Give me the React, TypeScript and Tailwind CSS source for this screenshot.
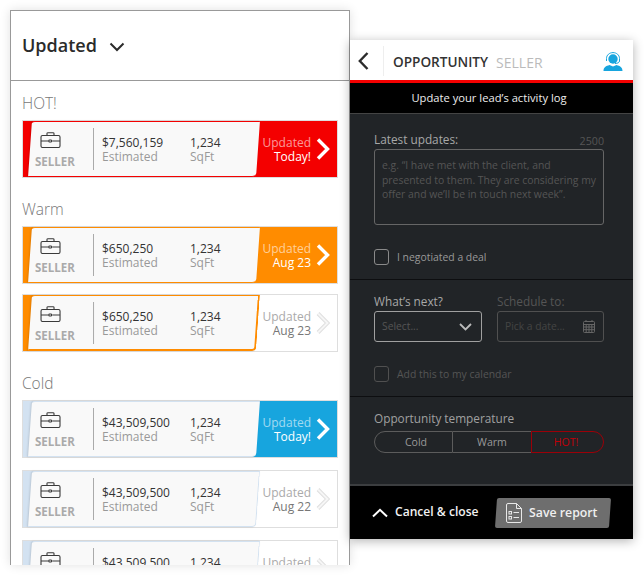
import React from "react";

function Briefcase() {
  return (
    <svg width="21" height="16" viewBox="0 0 21 16" fill="none" stroke="#3a3a3a" strokeWidth="1.1">
      <rect x="1" y="3.5" width="19" height="12" rx="1.5" />
      <path d="M7 3.5V1.6C7 1 7.4.7 8 .7h5c.6 0 1 .3 1 .9v1.9" />
      <path d="M1 9h7.8M12.2 9H20" />
      <rect x="8.9" y="8" width="2.6" height="2" rx=".6" />
    </svg>
  );
}

function Chevron({ selected }: { selected?: boolean }) {
  return (
    <svg width="14" height="22" viewBox="0 0 14 22" fill="none">
      {selected ? (
        <path d="M2 1.500 11.500 11 2 20.500" stroke="#ffffff" strokeWidth="3.4" />
      ) : (
        <>
          <path d="M2 1.500 11.500 11 2 20.500" stroke="#e0e0e0" strokeWidth="4" />
          <path d="M2 1.500 11.500 11 2 20.500" stroke="#f6f6f6" strokeWidth="1.800" />
        </>
      )}
    </svg>
  );
}

type CardProps = {
  price: string;
  date: string;
  bg: string;
  edge: string;
  selected?: boolean;
  strong?: boolean;
  gap: string;
};

function Card({ price, date, bg, edge, selected, strong, gap }: CardProps) {
  return (
    <div className={`${gap} flex h-[58px] w-[316px] border border-[#dedede] ${bg}`}>
      <div
        className={`ml-[7px] h-[56px] w-[228px] shrink-0 -skew-x-[4deg] rounded-br-[4px] rounded-tl-[3px] border-y bg-[#f9f9f9] ${edge} ${selected ? "" : "border-r"} ${strong ? "border-r-2 border-b-2" : ""} shadow-[-1px_0_2px_rgba(0,0,0,0.12)]`}
      >
        <div className="flex h-full skew-x-[4deg] items-center">
          <div className="flex w-[63px] flex-col items-start pl-[5px] pt-[4px]">
            <div className="ml-[5px]">
              <Briefcase />
            </div>
            <div className="mt-[6px] text-[11.500px] font-bold leading-[16px] text-[#aaaaaa]">SELLER</div>
          </div>
          <div className="h-[42px] w-[1px] bg-[#aaaaaa]" />
          <div className="ml-[8px] w-[88px] pt-[2px] text-[12px] leading-[14px]">
            <div className="text-[#333333]">{price}</div>
            <div className="text-[#999999]">Estimated</div>
          </div>
          <div className="pt-[2px] text-[12px] leading-[14px]">
            <div className="text-[#333333]">1,234</div>
            <div className="text-[#999999]">SqFt</div>
          </div>
        </div>
      </div>
      <div className="flex flex-1 items-center justify-end pr-[7px]">
        <div className="pt-[2px] text-right text-[12px] leading-[14px]">
          <div className={selected ? "text-white/60" : "text-[#aaaaaa]"}>Updated</div>
          <div className={selected ? "font-medium text-white" : "text-[#777777]"}>{date}</div>
        </div>
        <div className="ml-[5px]">
          <Chevron selected={selected} />
        </div>
      </div>
    </div>
  );
}

function Label({ text, first }: { text: string; first?: boolean }) {
  return (
    <div className={`${first ? "mt-[11px]" : "mt-[20px]"} mb-[6px] h-[22px] text-[15.500px] font-light leading-[22px] text-[#777777]`}>
      {text}
    </div>
  );
}

function Box({ className }: { className: string }) {
  return <div className={`h-[16px] w-[15px] rounded-[3px] border ${className}`} />;
}

export default function App() {
  return (
    <div className="flex h-[575px] w-[644px] items-start overflow-hidden bg-white pl-[10px] pt-[10px] font-['Open_Sans',sans-serif]">
      <div className="h-[555px] w-[340px] shrink-0 overflow-hidden border-x border-t border-[#999999] bg-white shadow-[0_0_10px_rgba(0,0,0,0.12)]">
        <div className="flex h-[70px] items-center border-b border-[#999999] pl-[11px]">
          <span className="text-[18px] font-semibold text-[#2b2b2b]">Updated</span>
          <svg className="ml-[12px] mt-[3px]" width="16" height="10" viewBox="0 0 16 10" fill="none" stroke="#2b2b2b" strokeWidth="2">
            <path d="M1.500 1.500 8 8l6.500-6.500" />
          </svg>
        </div>
        <div className="pl-[11px]">
          <Label text="HOT!" first />
          <Card gap="" price="$7,560,159" date="Today!" selected bg="bg-[#f40000]" edge="border-[#f40000]" />
          <Label text="Warm" />
          <Card gap="" price="$650,250" date="Aug 23" selected bg="bg-[#ff8c00]" edge="border-[#ff8c00]" />
          <Card gap="mt-[10px]" price="$650,250" date="Aug 23" strong bg="bg-[linear-gradient(90deg,#ff8c00_12px,#ffffff_12px)]" edge="border-[#ff8c00]" />
          <Label text="Cold" />
          <Card gap="" price="$43,509,500" date="Today!" selected bg="bg-[linear-gradient(90deg,#d3e2f1_12px,#17a5de_12px)]" edge="border-[#d3e2f1]" />
          <Card gap="mt-[12px]" price="$43,509,500" date="Aug 22" bg="bg-[linear-gradient(90deg,#d3e2f1_12px,#ffffff_12px)]" edge="border-[#d3e2f1]" />
          <Card gap="mt-[12px]" price="$43,509,500" date="Aug 22" bg="bg-[linear-gradient(90deg,#d3e2f1_12px,#ffffff_12px)]" edge="border-[#d3e2f1]" />
        </div>
      </div>

      <div className="mt-[30px] flex h-[499px] w-[283px] shrink-0 flex-col bg-[#212427] shadow-[0_2px_10px_rgba(0,0,0,0.3)]">
        <div className="flex h-[40px] shrink-0 items-center bg-white pt-[2px]">
          <svg className="ml-[8px]" width="11" height="18" viewBox="0 0 11 18" fill="none" stroke="#2b2b2b" strokeWidth="2.400">
            <path d="M9.500 1 1.800 9l7.700 8" />
          </svg>
          <div className="ml-[14px] h-[30px] w-[1px] bg-[#eeeeee]" />
          <span className="ml-[9px] pt-[2px] text-[13.600px] font-semibold text-[#333333]">OPPORTUNITY</span>
          <span className="ml-[8px] pt-[2px] text-[14px] text-[#bbbbbb]">SELLER</span>
          <svg className="ml-auto mr-[10px]" width="20" height="19" viewBox="0 0 20 19" fill="#17a5de">
            <circle cx="10" cy="7" r="4.700" />
            <path d="M0.500 19c0-3.800 2.500-5 6-6l3.500 1.500 3.500-1.500c3.500 1 6 2.200 6 6z" />
            <path d="M3.500 9V6.500C3.500 3 6.500.6 10 .6s6.500 2.400 6.500 5.900V9c0 1.500-2 2.500-4.500 2.500" fill="none" stroke="#17a5de" strokeWidth="1" />
          </svg>
        </div>
        <div className="h-[3px] shrink-0 bg-[#f40000]" />
        <div className="flex h-[31px] shrink-0 items-center justify-center border-b border-[#444444] bg-black pr-[5px] text-[11.200px] font-medium text-[#eeeeee]">
          Update your lead’s activity log
        </div>

        <div className="flex h-[166px] shrink-0 flex-col border-b border-[#0d0e10] pl-[24px] pr-[29px]">
          <div className="mt-[16px] flex items-end justify-between">
            <span className="text-[11.800px] leading-[18px] text-[#a8a8a8]">Latest updates:</span>
            <span className="text-[10.700px] leading-[14px] text-[#555555]">2500</span>
          </div>
          <div className="mt-[1px] h-[76px] rounded-[3px] border border-[#666666] px-[7px] pt-[8px] text-[10.400px] leading-[14.700px] text-[#555555]">
            e.g. “I have met with the client, and presented to them. They are considering my offer and we’ll be in touch next week”.
          </div>
          <div className="mt-[23px] flex items-center">
            <Box className="border-[#8a8a8a]" />
            <span className="ml-[8px] pt-[2px] text-[10.400px] text-[#999999]">I negotiated a deal</span>
          </div>
        </div>

        <div className="flex h-[117px] shrink-0 flex-col border-b border-[#0d0e10] pl-[24px] pr-[29px]">
          <div className="mt-[12px] flex gap-[15px]">
            <div className="w-[108px]">
              <div className="text-[11.800px] leading-[18px] text-[#a8a8a8]">What’s next?</div>
              <div className="mt-[1px] flex h-[31px] items-center justify-between rounded-[3px] border border-[#a0a0a0] pl-[7px] pr-[9px] text-[10.300px] text-[#555555]">
                Select...
                <svg width="13" height="8" viewBox="0 0 13 8" fill="none" stroke="#bbbbbb" strokeWidth="1.800">
                  <path d="M1 1l5.500 5.500L12 1" />
                </svg>
              </div>
            </div>
            <div className="w-[107px]">
              <div className="text-[11.800px] leading-[18px] text-[#555555]">Schedule to:</div>
              <div className="mt-[1px] flex h-[31px] items-center justify-between rounded-[3px] border border-[#505050] pl-[7px] pr-[8px] text-[10.300px] text-[#444444]">
                Pick a date...
                <svg width="12" height="13" viewBox="0 0 12 13" fill="none" stroke="#666666" strokeWidth="1">
                  <rect x=".5" y="1.500" width="11" height="11" rx="1" />
                  <path d="M.5 4.500h11M3.200 4.500v8M6 4.500v8M8.800 4.500v8M.5 7h11M.5 9.700h11M3 0v2M9 0v2" />
                </svg>
              </div>
            </div>
          </div>
          <div className="mt-[23px] flex items-center">
            <Box className="border-[#505050]" />
            <span className="ml-[8px] pt-[2px] text-[10.400px] text-[#555555]">Add this to my calendar</span>
          </div>
        </div>

        <div className="flex flex-1 flex-col pl-[24px] pr-[29px]">
          <div className="mt-[12px] text-[11.800px] leading-[18px] text-[#a0a0a0]">Opportunity temperature</div>
          <div className="mt-[4px] flex h-[22px] text-[10.600px]">
            <div className="flex w-[79px] items-center justify-center rounded-l-full border border-[#5c5c5c] pl-[5px] pt-[1px] text-[#999999]">Cold</div>
            <div className="flex w-[78px] items-center justify-center border-y border-[#5c5c5c] pt-[1px] text-[#999999]">Warm</div>
            <div className="flex flex-1 items-center justify-center rounded-r-full border border-[#9c0008] pr-[3px] pt-[1px] font-medium text-[#c00008]">HOT!</div>
          </div>
        </div>

        <div className="flex h-[55px] shrink-0 items-center border-t-2 border-[#3c3e40] bg-black">
          <svg className="ml-[22px]" width="16" height="10" viewBox="0 0 16 10" fill="none" stroke="#ffffff" strokeWidth="2">
            <path d="M1 8.500 8 1.800l7 6.700" />
          </svg>
          <span className="ml-[7px] text-[12.100px] font-semibold text-[#f2f2f2]">Cancel &amp; close</span>
          <div className="ml-[17px] flex h-[30px] w-[114px] -skew-x-[4deg] items-center rounded-[2px] bg-[#6e6e6e]">
            <div className="flex skew-x-[4deg] items-center pl-[10px]">
              <svg width="16" height="20" viewBox="0 0 16 20" fill="none" stroke="#e8e8e8" strokeWidth="1">
                <path d="M2 .5h8.500L15.500 5.500V18a1.500 1.500 0 0 1-1.500 1.500H2A1.500 1.500 0 0 1 .5 18V2A1.500 1.500 0 0 1 2 .5Z" />
                <path d="M10.500.5v5h5M7.500 9.500h5.500M7.500 14.500h5.500" />
                <rect x="3" y="8.500" width="2.500" height="2.500" />
                <rect x="3" y="13.500" width="2.500" height="2.500" />
              </svg>
              <span className="ml-[7px] text-[12.300px] font-semibold text-[#f0f0f0]">Save report</span>
            </div>
          </div>
        </div>
      </div>
    </div>
  );
}
